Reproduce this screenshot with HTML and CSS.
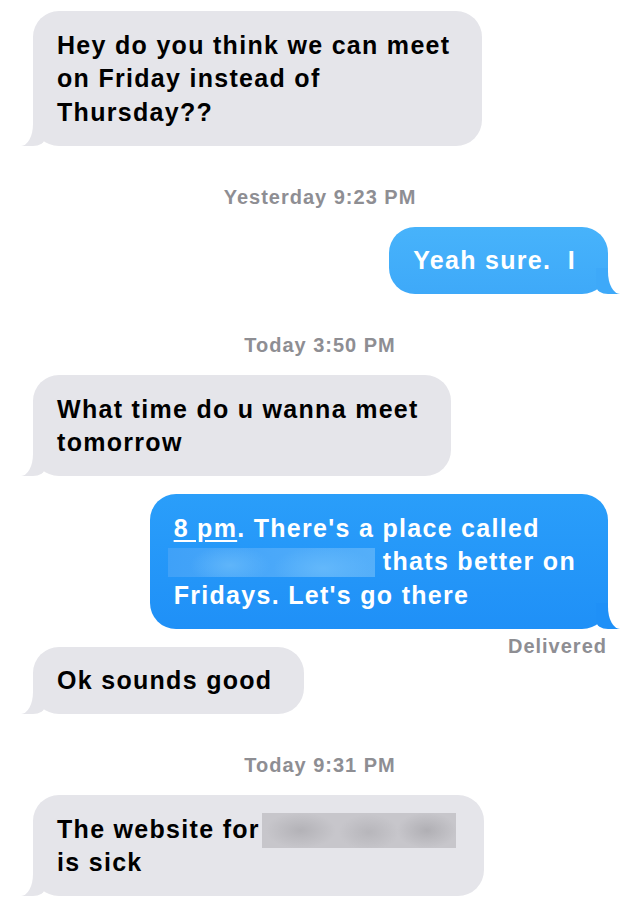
FILE: index.html
```html
<!DOCTYPE html>
<html>
<head>
    <title>Messages</title>
    <link rel="stylesheet" href="styles.css">
</head>
<body>
    <div class="thread">
        <div class="msg them">
            <div class="bubble">Hey do you think we can meet<br>on Friday instead of<br>Thursday??</div>
        </div>

        <div class="stamp">Yesterday 9:23 PM</div>

        <div class="msg me light">
            <div class="bubble">Yeah sure.&nbsp; I</div>
        </div>

        <div class="stamp">Today 3:50 PM</div>

        <div class="msg them">
            <div class="bubble">What time do u wanna meet<br>tomorrow</div>
        </div>

        <div class="msg me">
            <div class="bubble"><span class="link">8 pm</span>. There's a place called<br><span class="blur blur-blue"></span> thats better on<br>Fridays. Let's go there</div>
        </div>
        <div class="status">Delivered</div>

        <div class="msg them">
            <div class="bubble">Ok sounds good</div>
        </div>

        <div class="stamp">Today 9:31 PM</div>

        <div class="msg them">
            <div class="bubble">The website for<span class="blur blur-gray"></span><br>is sick</div>
        </div>
    </div>
</body>
</html>
```

FILE: styles.css
```css
body { margin: 0; background: #fff; font-family: "Liberation Sans", Arial, sans-serif; }
.thread { display: flex; flex-direction: column; padding-top: 11px; }

/* rows */
.msg { display: flex; margin-top: 18px; }
.msg:first-child { margin-top: 0; }
.them { justify-content: flex-start; padding-left: 33px; }
.me { justify-content: flex-end; padding-right: 32px; }

/* bubbles */
.bubble { position: relative; padding: 17.5px 32px 16.5px 24px; border-radius: 26px; font-size: 25px; line-height: 33.5px; font-weight: bold; letter-spacing: 1.3px; white-space: nowrap; }
.them .bubble { background: #e5e5ea; color: #000; }
.me .bubble { --tail: #1f90f7; background: linear-gradient(#2a9efa, var(--tail)); color: #fff; }
.me.light .bubble { --tail: #3ea9f9; background: linear-gradient(#47b3fb, var(--tail)); }

/* tails */
.bubble::before, .bubble::after { content: ""; position: absolute; bottom: 0; height: 26px; }
.them .bubble::before { left: -12px; width: 24px; background: #e5e5ea; border-bottom-right-radius: 12px 8px; }
.them .bubble::after { left: -30px; width: 30px; background: #fff; border-bottom-right-radius: 12px 22px; }
.me .bubble::before { right: -12px; width: 24px; background: var(--tail); border-bottom-left-radius: 12px 8px; }
.me .bubble::after { right: -30px; width: 30px; background: #fff; border-bottom-left-radius: 12px 22px; }

.link { text-decoration: underline; text-underline-offset: 3px; }

/* hidden names */
.blur { display: inline-block; vertical-align: top; }
.blur-blue { width: 207px; height: 29px; margin: 3px 0 0 -6px; background: radial-gradient(ellipse 40px 20px at 30% 60%, #5fb5fa, transparent), radial-gradient(ellipse 50px 22px at 75% 70%, #63b8fb, transparent), linear-gradient(90deg, #3fa1f8, #4aa8f9 50%, #55aff9); }
.blur-gray { width: 194px; height: 35px; margin: 0 -4px -2px 2px; background: radial-gradient(ellipse 35px 18px at 20% 50%, #b3b2b7, transparent), radial-gradient(ellipse 30px 18px at 55% 55%, #b7b6bb, transparent), radial-gradient(ellipse 30px 18px at 85% 50%, #b0afb4, transparent), #c7c6cb; }

/* meta text */
.stamp, .status { font-size: 20px; line-height: 20px; font-weight: bold; letter-spacing: 1px; color: #8e8e93; }
.stamp { text-align: center; margin: 41px 0 20px; }
.stamp + .msg { margin-top: 0; }
.status { text-align: right; margin: 7px 33px 0 0; }
.status + .msg { margin-top: -9px; }
```
